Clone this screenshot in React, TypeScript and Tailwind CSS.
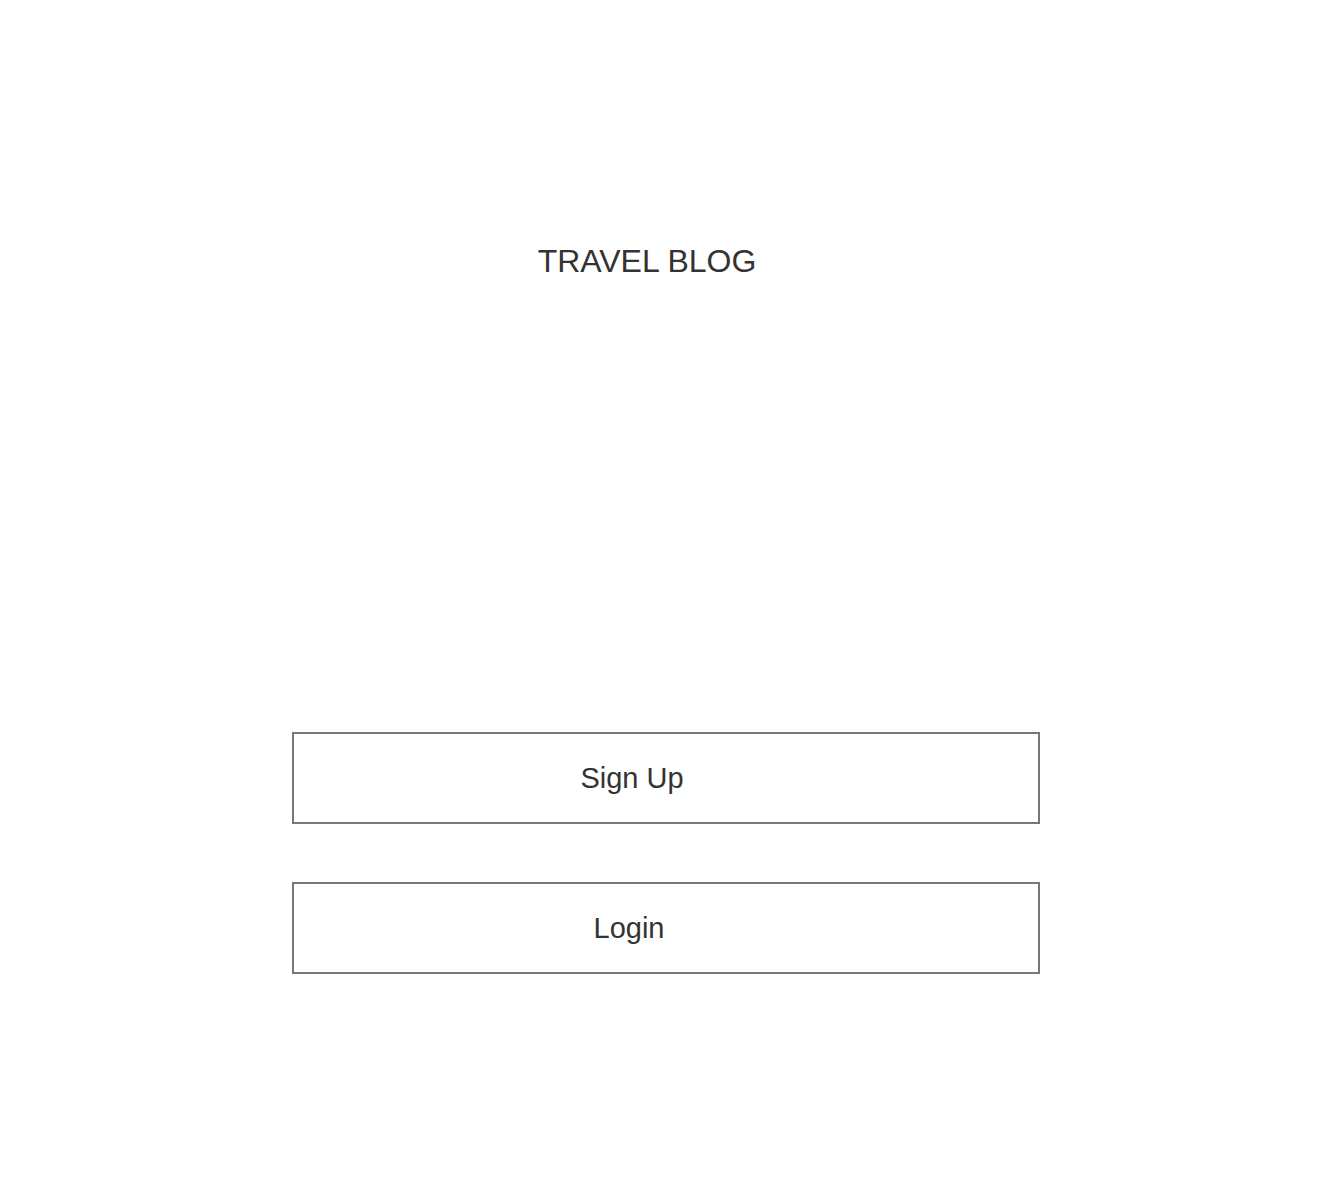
export default function App() {
  return (
    <div
      className="min-h-screen bg-white flex flex-col items-center"
      style={{ fontFamily: '"Liberation Sans", Arial, sans-serif' }}
    >
      {/* Title */}
      <h1 className="mt-[245px] w-full pr-[44px] text-center text-[32px] leading-[32px] font-normal text-[#333333]">
        TRAVEL BLOG
      </h1>

      {/* Actions */}
      <div className="mt-[455px] flex flex-col gap-[58px] w-[748px] -translate-x-[3px]">
        <button className="h-[92px] w-full border-2 border-[#777777] bg-white pr-[68px] flex items-center justify-center text-[29px] leading-none text-[#333333]">
          Sign Up
        </button>
        <button className="h-[92px] w-full border-2 border-[#777777] bg-white pr-[74px] flex items-center justify-center text-[29px] leading-none text-[#333333]">
          Login
        </button>
      </div>
    </div>
  );
}
